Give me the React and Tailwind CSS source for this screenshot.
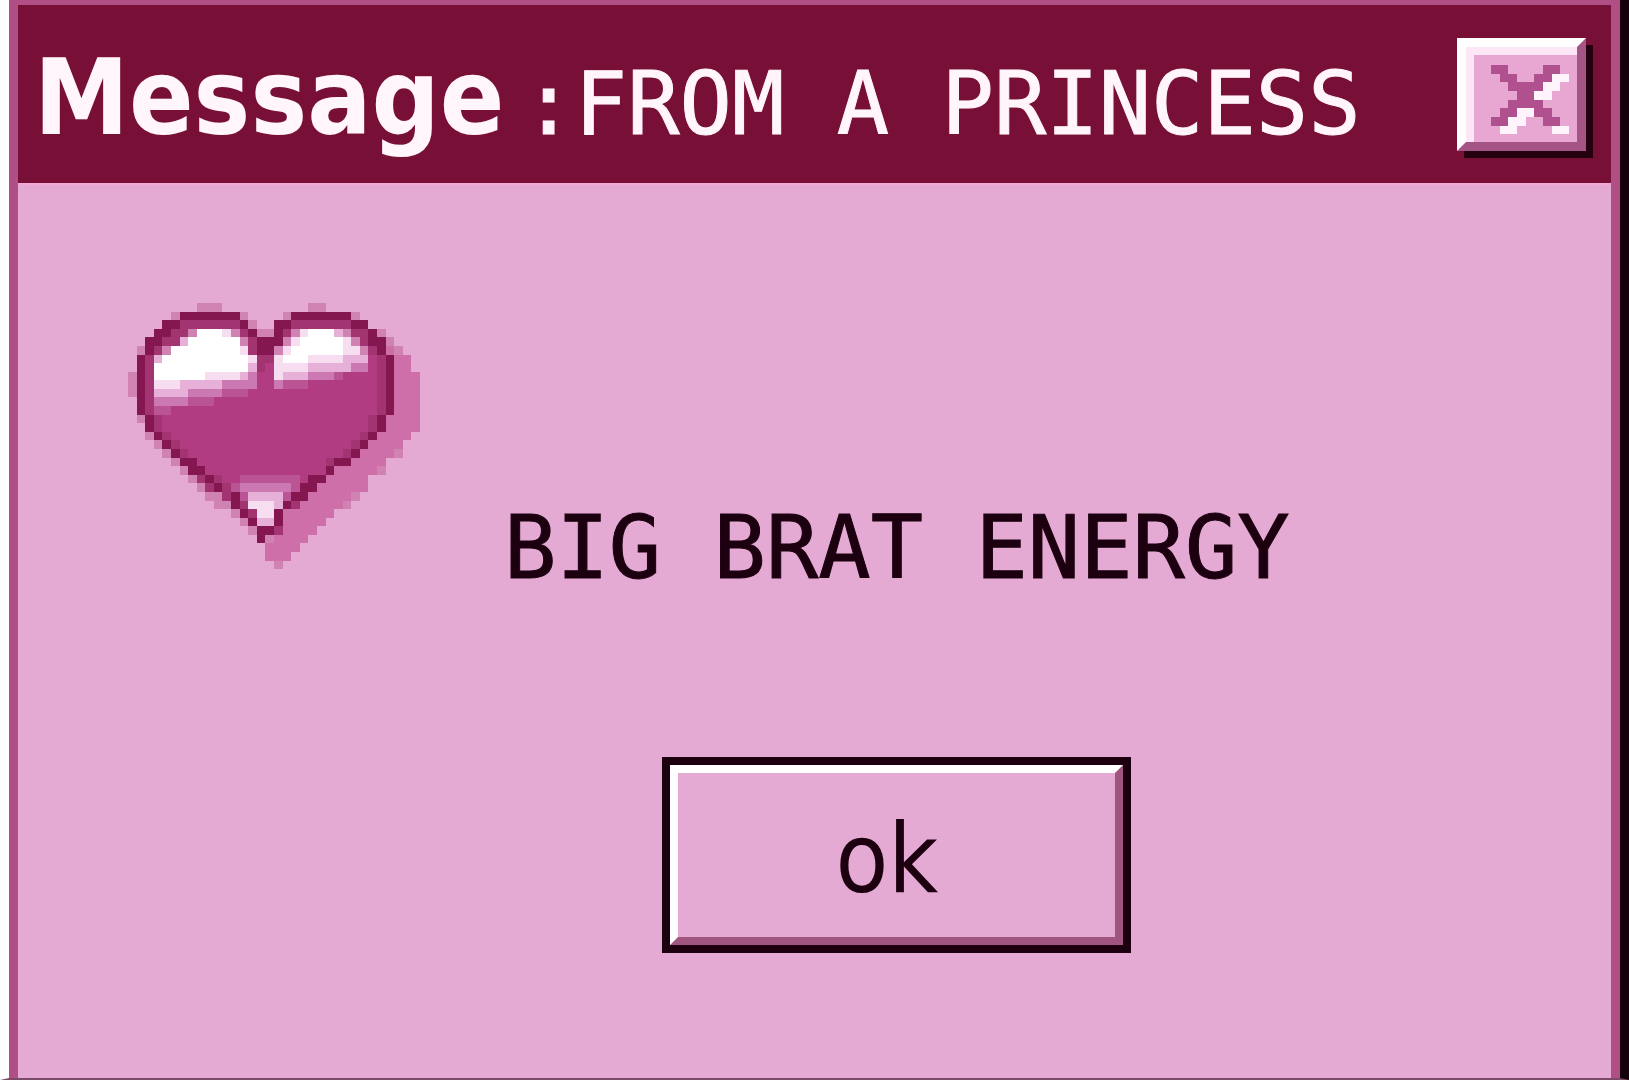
const HEART_COLORS = {
  D: "#84174f",
  m: "#a33472",
  B: "#b23c81",
  c: "#bb5494",
  k: "#cc78b2",
  l: "#e6b0d8",
  w: "#f6def0",
  W: "#ffffff",
  p: "#d083b3",
  s: "#cf6fa9",
};

// Each row is a list of runs: a length followed by a colour key ("." is empty).
const HEART_ROWS = [
  "8. 3p 10. 2p",
  "5. 1p 7D 1p 4. 1p 7D 1p",
  "4. 2D 7m 1D 1p 2. 2D 7m 2D",
  "3. 2D 2m 1p 3W 1w 1p 1m 1D 2p 1D 1m 1p 1w 3W 1l 1p 2m 1D 1p",
  "2. 2D 2m 1l 6W 1p 1m 3D 1p 1w 5W 1w 1p 1m 2D 1p",
  "1. 1p 1D 1m 1p 8W 1w 1m 2D 1p 1w 6W 2w 1p 1m 1D 1s 1p",
  "1. 1D 1m 1l 10W 1w 2m 1w 3W 4w 3l 1B 1m 1D 2s",
  "1. 1D 1m 11W 1l 1m 1B 4w 5l 2k 1B 1m 1D 2s",
  "1p 1D 1m 6W 4w 1l 1k 2B 1w 3l 3k 1c 4B 1m 1D 3s",
  "1p 1D 1m 3w 5l 4k 2B 1k 3c 8B 1m 1D 3s",
  "1p 1D 1m 4l 4k 3c 15B 1m 1D 3s",
  "1. 1D 1m 4k 3c 19B 1m 1D 3s",
  "1. 1D 1m 2c 24B 1m 1D 3s",
  "1. 1p 1D 1m 24B 1m 1D 4s",
  "2. 1D 1m 24B 1m 1D 4s",
  "2. 1p 1D 1m 22B 1m 1D 4s",
  "3. 1p 1D 1m 20B 1m 1D 4s",
  "4. 1p 1D 1m 18B 1m 1D 4s 1p",
  "5. 1p 2D 15B 1m 2D 4s",
  "6. 1p 2D 14B 1D 5s 1p",
  "7. 1p 1m 1D 1m 2B 7c 1B 2D 5s",
  "8. 1p 1m 1D 1m 1c 6k 1c 2D 6s",
  "9. 2p 1m 1D 1c 4l 1c 2D 5s 1p",
  "10. 2p 1D 1m 3w 1l 1D 1m 5s 1p",
  "12. 1p 1D 1m 2w 1D 6s",
  "13. 1p 1D 2l 1D 5s",
  "14. 1p 2D 1m 4s",
  "15. 1D 1p 4s",
  "16. 4s",
  "16. 3s",
  "17. 1p",
];

const CROSS_COLORS = { X: "#b0508f", W: "#fff4fb" };

const CROSS_ROWS = [
  "2X 4. 2X",
  "1. 2X 2. 2X 2W",
  "2. 4X 2W",
  "3. 2X 2W",
  "2. 4X",
  "1. 2X 2W 2X",
  "2X 2W 2. 2X",
  "1. 2W 4. 2W",
];

function PixelArt({ rows, colors, columns, className }) {
  return (
    <svg
      className={className}
      viewBox={`0 0 ${columns} ${rows.length}`}
      shapeRendering="crispEdges"
      aria-hidden="true"
    >
      {rows.map((row, y) => {
        let x = 0;
        return row.split(" ").map((run, i) => {
          const length = parseInt(run, 10);
          const key = run.slice(-1);
          const start = x;
          x += length;
          if (key === ".") return null;
          return (
            <rect key={`${y}-${i}`} x={start} y={y} width={length} height={1} fill={colors[key]} />
          );
        });
      })}
    </svg>
  );
}

function TitleBar() {
  return (
    <header className="flex items-center justify-between bg-[#770f37] py-8 pl-4 pr-[25px]">
      <h1 className="flex items-baseline gap-[18px] whitespace-nowrap pt-2 text-[#fff5fb]">
        <span className="font-['DejaVu_Sans_Condensed','DejaVu_Sans',sans-serif] text-[106px] font-bold leading-none">
          Message
        </span>
        <span className="font-['DejaVu_Sans_Mono',monospace] text-[87px] font-normal leading-none [-webkit-text-stroke:1px]">
          :FROM A PRINCESS
        </span>
      </h1>
      <button
        type="button"
        aria-label="Close"
        className="shrink-0 border-[9px] border-b-[#a55486] border-l-white border-r-[#a55486] border-t-white bg-[#e8a6d3] shadow-[7px_7px_0_#25000f]"
      >
        <span className="flex h-[95px] w-[111px] items-center justify-center border-l-8 border-t-8 border-[#fde6f5] pl-2 pt-1">
          <PixelArt rows={CROSS_ROWS} colors={CROSS_COLORS} columns={9} className="w-[78px]" />
        </span>
      </button>
    </header>
  );
}

export default function App() {
  return (
    <div className="flex min-h-screen border-b-2 border-l-[9px] border-r-[9px] border-b-[#7a4a66] border-l-white border-r-[#16000c] bg-[#e5aad3]">
      <main className="flex flex-1 flex-col border-x-[9px] border-t-[5px] border-[#b04f85]">
        <TitleBar />
        <section className="flex flex-1 items-start gap-[84px] border-t-2 border-[#f3a9d6] pl-[110px]">
          <PixelArt
            rows={HEART_ROWS}
            colors={HEART_COLORS}
            columns={34}
            className="mt-[118px] w-[292px] shrink-0"
          />
          <div className="flex flex-col items-center pt-80">
            <p className="whitespace-nowrap font-['DejaVu_Sans_Mono',monospace] text-[87px] leading-none text-[#1c0010] [-webkit-text-stroke:1px]">
              BIG BRAT ENERGY
            </p>
            <button
              type="button"
              className="mt-[165px] border-8 border-[#1c0010] font-['DejaVu_Sans_Condensed','DejaVu_Sans',sans-serif] text-[96px] leading-none text-[#1c0010]"
            >
              <span className="flex h-[180px] w-[453px] items-center justify-center border-8 border-b-[#a0557f] border-l-white border-r-[#a0557f] border-t-white pr-5 pt-2">
                ok
              </span>
            </button>
          </div>
        </section>
      </main>
    </div>
  );
}
